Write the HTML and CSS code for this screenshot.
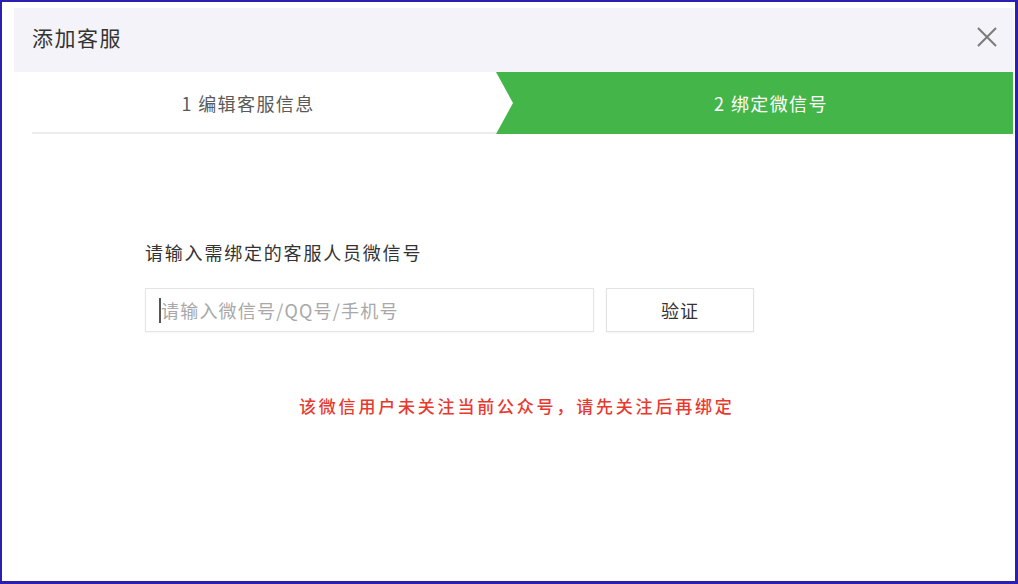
FILE: index.html
```html
<!DOCTYPE html>
<html lang="zh-CN">
<head>
<meta charset="utf-8">
<title>添加客服</title>
<link rel="stylesheet" href="styles.css">
</head>
<body>
<div class="frame">
  <div class="dialog">
    <div class="header">
      <h1 class="title">添加客服</h1>
      <button class="close" aria-label="关闭">
        <svg width="20" height="20" viewBox="0 0 20 20"><path d="M1 1 L19 19 M19 1 L1 19" stroke="#7a7a7a" stroke-width="2" fill="none"/></svg>
      </button>
    </div>
    <div class="steps">
      <div class="step step-done">1 编辑客服信息</div>
      <div class="step step-active">2 绑定微信号</div>
    </div>
    <div class="content">
      <div class="label">请输入需绑定的客服人员微信号</div>
      <div class="form-row">
        <div class="input"><span class="caret"></span><span class="placeholder">请输入微信号/QQ号/手机号</span></div>
        <button class="verify">验证</button>
      </div>
      <div class="error">该微信用户未关注当前公众号，请先关注后再绑定</div>
    </div>
  </div>
</div>
</body>
</html>
```
FILE: styles.css
```css
* { box-sizing: border-box; }
html, body { margin: 0; padding: 0; }
body {
  width: 1018px;
  height: 584px;
  overflow: hidden;
  font-family: "Noto Sans CJK SC", "Noto Sans", sans-serif;
  background: #fff;
}
.frame {
  width: 1018px;
  height: 584px;
  border-style: solid;
  border-color: #2a1fb0;
  border-width: 2px 3px 3px 2px;
  padding: 6px 1px 0 12px;
  background: #fff;
}
.dialog {
  width: 1000px;
  height: 100%;
  display: flex;
  flex-direction: column;
}
.header {
  height: 64px;
  background: #f3f3f9;
  display: flex;
  align-items: center;
  justify-content: space-between;
  padding: 0 17px 6px 18px;
}
.title {
  margin: 0;
  font-size: 21px;
  font-weight: normal;
  color: #333;
  letter-spacing: 1.5px;
  line-height: 28px;
}
.close {
  border: 0;
  background: none;
  padding: 0;
  width: 20px;
  height: 20px;
  display: flex;
}
.steps {
  height: 62px;
  display: flex;
}
.step {
  height: 62px;
  display: flex;
  align-items: center;
  justify-content: center;
  font-size: 18px;
  letter-spacing: 1.4px;
  line-height: 24px;
}
.step-done {
  width: 482px;
  color: #5a5a5a;
  padding-right: 14px;
  background: linear-gradient(to bottom, #fff 0, #fff 60px, #ececec 60px, #ececec 62px) no-repeat 18px 0 / 464px 100%;
}
.step-active {
  width: 517px;
  color: #fff;
  background: #44b549;
  padding-left: 33px;
  clip-path: polygon(0 0, 100% 0, 100% 100%, 0 100%, 17px 50%);
}
.content {
  padding: 106px 0 0 131px;
}
.label {
  font-size: 18px;
  line-height: 24px;
  color: #333;
  letter-spacing: 1.8px;
  margin-bottom: 24px;
}
.form-row {
  display: flex;
  gap: 12px;
}
.input {
  width: 449px;
  height: 44px;
  border: 1px solid #e4e4e4;
  box-shadow: 0 1px 2px rgba(0,0,0,0.04);
  display: flex;
  align-items: center;
  padding-left: 13px;
}
.caret {
  width: 2px;
  height: 25px;
  background: #555;
}
.placeholder {
  font-size: 18px;
  color: #a8a8a8;
  letter-spacing: 1.2px;
  line-height: 24px;
}
.verify {
  width: 148px;
  height: 44px;
  border: 1px solid #e2e2e2;
  background: #fff;
  box-shadow: 0 1px 2px rgba(0,0,0,0.05);
  font-family: inherit;
  font-size: 18px;
  color: #333;
  letter-spacing: 1px;
  padding: 0;
}
.error {
  margin-top: 62px;
  margin-left: 154px;
  font-size: 17px;
  font-weight: 500;
  line-height: 24px;
  color: #e8392f;
  letter-spacing: 2.8px;
}
```
